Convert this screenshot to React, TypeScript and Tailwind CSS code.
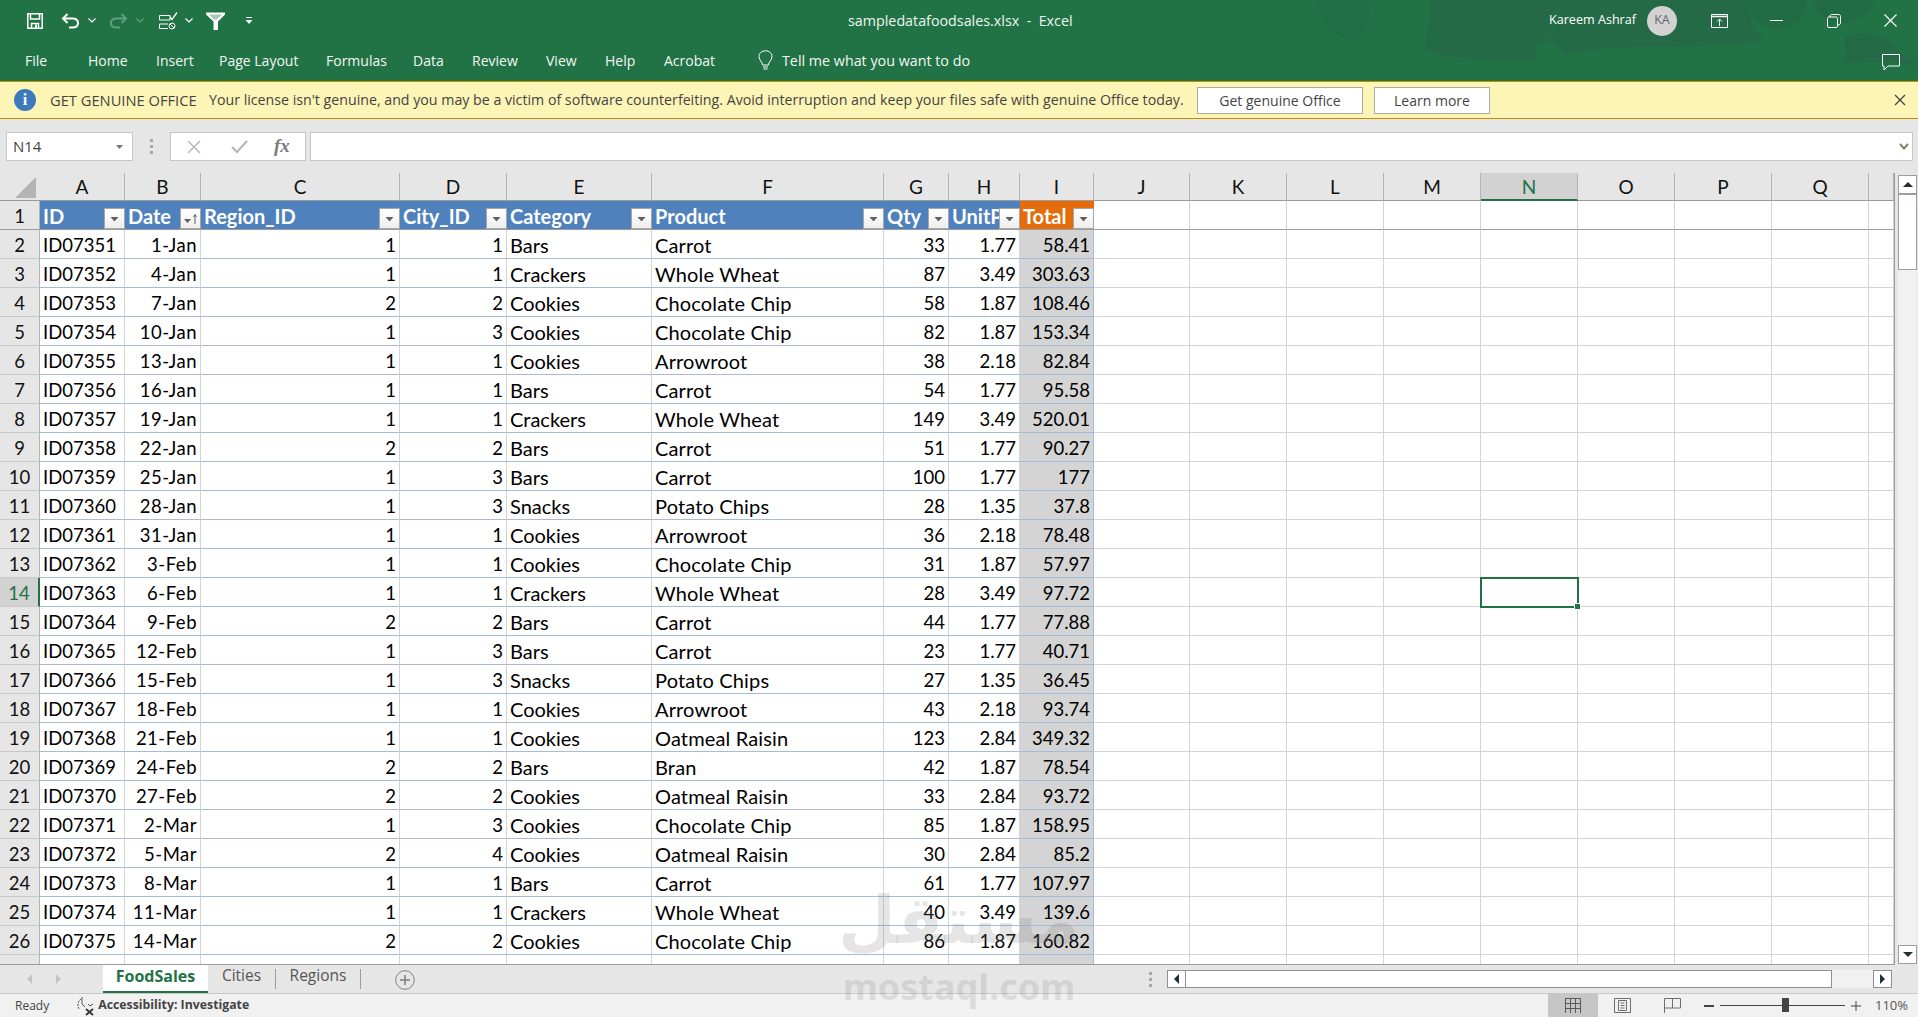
import React from "react";

const rows: [string, string, number, number, string, string, number, string, string][] = [
  ["ID07351", "1-Jan", 1, 1, "Bars", "Carrot", 33, "1.77", "58.41"],
  ["ID07352", "4-Jan", 1, 1, "Crackers", "Whole Wheat", 87, "3.49", "303.63"],
  ["ID07353", "7-Jan", 2, 2, "Cookies", "Chocolate Chip", 58, "1.87", "108.46"],
  ["ID07354", "10-Jan", 1, 3, "Cookies", "Chocolate Chip", 82, "1.87", "153.34"],
  ["ID07355", "13-Jan", 1, 1, "Cookies", "Arrowroot", 38, "2.18", "82.84"],
  ["ID07356", "16-Jan", 1, 1, "Bars", "Carrot", 54, "1.77", "95.58"],
  ["ID07357", "19-Jan", 1, 1, "Crackers", "Whole Wheat", 149, "3.49", "520.01"],
  ["ID07358", "22-Jan", 2, 2, "Bars", "Carrot", 51, "1.77", "90.27"],
  ["ID07359", "25-Jan", 1, 3, "Bars", "Carrot", 100, "1.77", "177"],
  ["ID07360", "28-Jan", 1, 3, "Snacks", "Potato Chips", 28, "1.35", "37.8"],
  ["ID07361", "31-Jan", 1, 1, "Cookies", "Arrowroot", 36, "2.18", "78.48"],
  ["ID07362", "3-Feb", 1, 1, "Cookies", "Chocolate Chip", 31, "1.87", "57.97"],
  ["ID07363", "6-Feb", 1, 1, "Crackers", "Whole Wheat", 28, "3.49", "97.72"],
  ["ID07364", "9-Feb", 2, 2, "Bars", "Carrot", 44, "1.77", "77.88"],
  ["ID07365", "12-Feb", 1, 3, "Bars", "Carrot", 23, "1.77", "40.71"],
  ["ID07366", "15-Feb", 1, 3, "Snacks", "Potato Chips", 27, "1.35", "36.45"],
  ["ID07367", "18-Feb", 1, 1, "Cookies", "Arrowroot", 43, "2.18", "93.74"],
  ["ID07368", "21-Feb", 1, 1, "Cookies", "Oatmeal Raisin", 123, "2.84", "349.32"],
  ["ID07369", "24-Feb", 2, 2, "Bars", "Bran", 42, "1.87", "78.54"],
  ["ID07370", "27-Feb", 2, 2, "Cookies", "Oatmeal Raisin", 33, "2.84", "93.72"],
  ["ID07371", "2-Mar", 1, 3, "Cookies", "Chocolate Chip", 85, "1.87", "158.95"],
  ["ID07372", "5-Mar", 2, 4, "Cookies", "Oatmeal Raisin", 30, "2.84", "85.2"],
  ["ID07373", "8-Mar", 1, 1, "Bars", "Carrot", 61, "1.77", "107.97"],
  ["ID07374", "11-Mar", 1, 1, "Crackers", "Whole Wheat", 40, "3.49", "139.6"],
  ["ID07375", "14-Mar", 2, 2, "Cookies", "Chocolate Chip", 86, "1.87", "160.82"],
];

const tableHeads = ["ID", "Date", "Region_ID", "City_ID", "Category", "Product", "Qty", "UnitPrice", "Total"];
const letters = ["A", "B", "C", "D", "E", "F", "G", "H", "I", "J", "K", "L", "M", "N", "O", "P", "Q", ""];
const blanks = ["J", "K", "L", "M", "N", "O", "P", "Q", "R"];
const menu: [string, string][] = [
  ["File", "w-[63px]"],
  ["Home", "w-[68px]"],
  ["Insert", "w-[63px]"],
  ["Page Layout", "w-[107px]"],
  ["Formulas", "w-[87px]"],
  ["Data", "w-[59px]"],
  ["Review", "w-[74px]"],
  ["View", "w-[59px]"],
  ["Help", "w-[59px]"],
  ["Acrobat", "w-[94px]"],
];

function Caret({ className }: { className: string }) {
  return (
    <svg className={className} width="8" height="5" viewBox="0 0 8 5" fill="none" stroke="currentColor" strokeWidth="1.2">
      <path d="M0.5 0.5L4 4L7.5 0.5" />
    </svg>
  );
}

function FilterButton({ sorted }: { sorted?: boolean }) {
  return (
    <div className="absolute right-0 bottom-0 w-[21px] h-[21px] border border-[#a6a6a6] bg-gradient-to-b from-white to-[#eeeeee] flex items-center justify-center">
      <svg width="19" height="19" viewBox="0 0 19 19">
        <path d={sorted ? "M3 10h7l-3.500 4z" : "M5.500 8h8l-4 4.500z"} fill="#606060" />
        {sorted && <path d="M14 15V6M12.500 8L14 5.500L15.500 8" fill="none" stroke="#606060" strokeWidth="1" />}
      </svg>
    </div>
  );
}

function TitleArt() {
  return (
    <svg className="absolute inset-0 pointer-events-none" width="1918" height="81" viewBox="0 0 1918 81">
      <path d="M1315 0C1318 18 1335 38 1352 42C1368 36 1372 14 1368 0Z" fill="#226e44" />
      <path d="M1428 0C1434 18 1424 38 1426 49C1450 62 1500 60 1538 60C1538 50 1530 46 1545 42C1552 28 1560 14 1566 0Z" fill="#246a46" />
      <path d="M1566 0C1560 18 1552 34 1548 40C1556 46 1562 50 1565 55C1600 44 1660 48 1700 46C1735 44 1760 44 1765 37C1752 32 1748 18 1752 0Z" fill="#246a46" />
      <path d="M1752 0C1750 14 1756 28 1776 30C1800 28 1808 12 1806 0Z" fill="#226c44" />
      <path d="M1812 0C1815 20 1840 28 1858 20C1872 14 1876 6 1872 0Z" fill="#226c44" />
      <path d="M1846 36C1868 28 1884 38 1890 42C1904 58 1918 64 1918 66C1890 58 1862 64 1842 62C1852 52 1840 44 1846 36Z" fill="#246a46" />
    </svg>
  );
}

function TitleBar() {
  return (
    <div className="relative h-[81px] bg-[#217346] text-white font-['Open_Sans',sans-serif] shrink-0">
      <TitleArt />
      <div className="relative h-[41px] flex items-center">
        <div className="w-[848px] shrink-0 flex items-center pl-[27px]">
          <svg width="16" height="16" viewBox="0 0 16 16" fill="none" stroke="white" strokeWidth="1.500">
            <path d="M0.800 0.800H15.200V15.200H0.800Z" />
            <path d="M3.500 1V6H12.500V1" />
            <path d="M4.500 15V10.500H11.500V15" />
            <rect x="8" y="11.500" width="2" height="3.500" fill="white" stroke="none" />
          </svg>
          <svg className="ml-[18px]" width="19" height="16" viewBox="0 0 19 16" fill="none" stroke="white" strokeWidth="2">
            <path d="M2 5.500H11.500C15 5.500 17 7.500 17 10C17 12.500 15 14.500 11.500 14.500H8" />
            <path d="M6.500 1L2 5.500L6.500 10" />
          </svg>
          <Caret className="ml-[8px] text-white" />
          <svg className="ml-[13px] opacity-30" width="19" height="16" viewBox="0 0 19 16" fill="none" stroke="white" strokeWidth="2">
            <path d="M17 5.500H7.500C4 5.500 2 7.500 2 10C2 12.500 4 14.500 7.500 14.500H11" />
            <path d="M12.500 1L17 5.500L12.500 10" />
          </svg>
          <Caret className="ml-[8px] text-white opacity-30" />
          <svg className="ml-[15px]" width="19" height="18" viewBox="0 0 19 18" fill="none" stroke="white" strokeWidth="1">
            <path d="M0.500 3.500H11V8H0.500ZM0.500 12H9M0.500 12V16.500H9" />
            <path d="M11 5L13 7.500L18 0.500" strokeWidth="1.300" />
            <circle cx="13" cy="14" r="3" />
            <path d="M11 12L15 16" />
          </svg>
          <Caret className="ml-[7px] text-white" />
          <svg className="ml-[13px]" width="19" height="18" viewBox="0 0 19 18" fill="white">
            <path d="M0 0.500H19V2.500L12 9.500V18H7.500V9.500L0 2.500Z" />
            <path d="M3 2.500H16L11 7.500H8Z" fill="#a9c7b5" />
          </svg>
          <svg className="ml-[20px]" width="8" height="8" viewBox="0 0 8 8" fill="white">
            <rect x="1" y="0" width="6" height="1" />
            <path d="M0.500 3H7.500L4 7Z" />
          </svg>
        </div>
        <div className="text-[14.300px] whitespace-pre text-[#eef5f0]">sampledatafoodsales.xlsx  -  Excel</div>
        <div className="flex-1 flex items-center justify-end">
          <span className="text-[12.600px]">Kareem Ashraf</span>
          <div className="ml-[11px] w-[30px] h-[30px] rounded-full bg-[#d2d2d2] text-[#666666] text-[12.500px] flex items-center justify-center">KA</div>
          <svg className="ml-[34px]" width="17" height="14" viewBox="0 0 17 14" fill="none" stroke="white" strokeWidth="1">
            <path d="M0.500 0.500H16.500V13.500H0.500Z" />
            <path d="M0.500 2.500H16.500" strokeWidth="1.500" />
            <path d="M8.500 12V5M6 7.500L8.500 5L11 7.500" />
          </svg>
          <svg className="ml-[42px]" width="13" height="1" viewBox="0 0 13 1"><rect width="13" height="1" fill="white" /></svg>
          <svg className="ml-[44px]" width="14" height="14" viewBox="0 0 14 14" fill="none" stroke="white" strokeWidth="1">
            <rect x="0.500" y="3" width="10" height="10.500" rx="1.500" />
            <path d="M3 3V2C3 1 3.800 0.500 4.800 0.500H11.500C12.700 0.500 13.500 1.300 13.500 2.500V9C13.500 10 13 10.800 11 11" />
          </svg>
          <svg className="ml-[43px] mr-[21px]" width="13" height="13" viewBox="0 0 13 13" fill="none" stroke="white" strokeWidth="1.200">
            <path d="M0.500 0.500L12.500 12.500M12.500 0.500L0.500 12.500" />
          </svg>
        </div>
      </div>
      <div className="relative h-[40px] flex items-center text-[14px] pl-[25px] pb-[1px] text-[#f3f7f4]">
        {menu.map(([label, width]) => (
          <div key={label} className={width}>{label}</div>
        ))}
        <svg width="15" height="21" viewBox="0 0 15 21" fill="none" stroke="white" strokeWidth="1">
          <path d="M4.500 15C4.500 11.500 1 10.500 1 6.500C1 3.200 3.800 0.800 7.500 0.800C11.200 0.800 14 3.200 14 6.500C14 10.500 10.500 11.500 10.500 15Z" />
          <path d="M5 17H10M5.500 19H9.500" />
        </svg>
        <div className="ml-[9px] text-[14.300px]">Tell me what you want to do</div>
        <svg className="absolute left-[1882px] top-[13px]" width="18" height="17" viewBox="0 0 18 17" fill="none" stroke="white" strokeWidth="1">
          <path d="M0.500 0.500H17.500V12H6L2 16V12H0.500Z" />
        </svg>
      </div>
    </div>
  );
}

function LicenseBar() {
  return (
    <div className="h-[38px] bg-[#fdf5b5] border-y border-[#bf9000] flex items-center pl-[14px] text-[#444444] text-[14.200px] font-['Open_Sans',sans-serif] shrink-0">
      <div className="w-[22px] h-[22px] rounded-full bg-[#3c79bd] flex items-center justify-center text-white font-bold text-[16px] font-['Liberation_Serif',serif]">i</div>
      <span className="ml-[14px] w-[159px] whitespace-nowrap text-[14.700px]">GET GENUINE OFFICE</span>
      <span className="whitespace-nowrap w-[988px]">Your license isn't genuine, and you may be a victim of software counterfeiting. Avoid interruption and keep your files safe with genuine Office today.</span>
      <button className="w-[166px] h-[27px] bg-white border border-[#ababab] text-[14px]">Get genuine Office</button>
      <button className="ml-[11px] w-[116px] h-[27px] bg-white border border-[#ababab] text-[14px]">Learn more</button>
      <svg className="ml-auto mr-[12px]" width="12" height="12" viewBox="0 0 12 12" fill="none" stroke="#444444" strokeWidth="1.300">
        <path d="M1 1L11 11M11 1L1 11" />
      </svg>
    </div>
  );
}

function FormulaBar() {
  return (
    <div className="h-[54px] pt-[13px] pl-[6px] pr-[5px] bg-[#e6e6e6] shrink-0 font-['Open_Sans',sans-serif]">
      <div className="h-[29px] flex items-stretch">
        <div className="w-[127px] bg-white border border-[#c6c6c6] flex items-center justify-between pl-[6px] pr-[9px] text-[15px] text-[#444444]">
          N14
          <svg width="7" height="4" viewBox="0 0 7 4"><path d="M0 0H7L3.500 4Z" fill="#777777" /></svg>
        </div>
        <div className="w-[37px] flex items-center justify-center">
          <div className="flex flex-col gap-[3px]">
            <div className="w-[3px] h-[3px] bg-[#a8a8a8]" />
            <div className="w-[3px] h-[3px] bg-[#a8a8a8]" />
            <div className="w-[3px] h-[3px] bg-[#a8a8a8]" />
          </div>
        </div>
        <div className="w-[136px] bg-white border border-[#c6c6c6] flex items-center">
          <svg className="ml-[16px]" width="14" height="14" viewBox="0 0 14 14" fill="none" stroke="#b8b8b8" strokeWidth="1.500">
            <path d="M1 1L13 13M13 1L1 13" />
          </svg>
          <svg className="ml-[30px]" width="17" height="14" viewBox="0 0 17 14" fill="none" stroke="#b8b8b8" strokeWidth="2.200">
            <path d="M1 7L6 12L16 1" />
          </svg>
          <span className="ml-[26px] text-[#7a7a7a] italic font-bold text-[19px] font-['Liberation_Serif',serif]">fx</span>
        </div>
        <div className="ml-[4px] flex-1 bg-white border border-[#c6c6c6] flex items-center justify-end pr-[3px]">
          <svg width="10" height="7" viewBox="0 0 10 7" fill="none" stroke="#857b6d" strokeWidth="2"><path d="M1 1L5 5.500L9 1" /></svg>
        </div>
      </div>
    </div>
  );
}

function ColumnHeaders() {
  return (
    <>
      <div className="relative h-[28px] border-b border-[#9b9b9b] bg-[#e6e6e6]">
        <svg className="absolute left-[15px] top-[4px]" width="21" height="21" viewBox="0 0 21 21"><path d="M21 0V21H0Z" fill="#b4b4b4" /></svg>
      </div>
      {letters.map((letter, i) => {
        const isActive = letter === "N";
        return (
          <div
            key={i}
            className={
              isActive
                ? "h-[28px] pt-[2px] border-r border-[#b4b4b4] border-b-2 border-b-[#217346] bg-[#d2d2d2] text-[#217346] flex items-center justify-center text-[19px]"
                : "h-[28px] pt-[2px] border-r border-[#b4b4b4] border-b border-b-[#9b9b9b] bg-[#e6e6e6] text-[#111111] flex items-center justify-center text-[19px]"
            }
          >
            {letter}
          </div>
        );
      })}
    </>
  );
}

function HeaderRow() {
  return (
    <>
      <div className="h-[29px] pt-[3px] border-r border-[#b4b4b4] border-b border-b-[#9b9b9b] bg-[#e6e6e6] flex items-center justify-center text-[18.500px] text-[#111111]">1</div>
      {tableHeads.map((head, i) => (
        <div
          key={head}
          className={
            i === 8
              ? "relative h-[29px] bg-[#e46c0a] border-b border-[#9b9b9b] text-white font-bold text-[20px] flex items-center pl-[3px] pt-[2px] overflow-hidden whitespace-nowrap"
              : "relative h-[29px] bg-[#4f81bd] border-b border-[#9b9b9b] text-white font-bold text-[20px] flex items-center pl-[3px] pt-[2px] overflow-hidden whitespace-nowrap"
          }
        >
          {head}
          <FilterButton sorted={i === 1} />
        </div>
      ))}
      {blanks.map((c) => (
        <div key={c} className="h-[29px] bg-white border-r border-[#d4d4d4] border-b border-b-[#9b9b9b]" />
      ))}
    </>
  );
}

function DataRow({ row, num }: { row: (typeof rows)[number]; num: number }) {
  const isActive = num === 14;
  const base = "h-[29px] bg-white border-r border-[#d4d4d4] border-b border-b-[#a3bcdc] flex items-center pl-[3px] pr-[3px] whitespace-nowrap overflow-hidden";
  return (
    <>
      <div
        className={
          isActive
            ? "h-[29px] pt-[4px] bg-[#d2d2d2] text-[#217346] border-r-2 border-[#217346] border-b border-b-[#c8c8c8] flex items-center justify-center text-[18.500px]"
            : "h-[29px] pt-[4px] bg-[#e6e6e6] text-[#111111] border-r border-[#b4b4b4] border-b border-b-[#c8c8c8] flex items-center justify-center text-[18.500px]"
        }
      >
        {num}
      </div>
      <div className={base + " pt-[3px]"}>{row[0]}</div>
      <div className={base + " pt-[3px] justify-end tracking-[0.5px]"}>{row[1]}</div>
      <div className={base + " pt-[3px] justify-end"}>{row[2]}</div>
      <div className={base + " pt-[3px] justify-end"}>{row[3]}</div>
      <div className={base + " pt-[1px] text-[20px]"}>{row[4]}</div>
      <div className={base + " pt-[1px] text-[20px] tracking-[0.15px]"}>{row[5]}</div>
      <div className={base + " pt-[3px] justify-end"}>{row[6]}</div>
      <div className={base + " pt-[3px] justify-end"}>{row[7]}</div>
      <div className="h-[29px] bg-[#d4d4d4] border-r border-[#a3bcdc] border-b border-b-[#a3bcdc] flex items-center justify-end pr-[3px] pt-[3px]">{row[8]}</div>
      {blanks.map((c) => (
        <div key={c} className="relative h-[29px] bg-white border-r border-[#d4d4d4] border-b border-b-[#d4d4d4]">
          {isActive && c === "N" && (
            <div className="absolute -left-[1px] -top-[1px] w-[99px] h-[31px] border-2 border-[#217346] z-10">
              <div className="absolute -right-[4px] -bottom-[4px] w-[7px] h-[7px] bg-[#217346] border border-white" />
            </div>
          )}
        </div>
      ))}
    </>
  );
}

function PartialRow() {
  return (
    <>
      <div className="h-[9px] bg-[#e6e6e6] border-r border-[#b4b4b4]" />
      {letters.map((letter, i) => (
        <div
          key={i}
          className={i === 8 ? "h-[9px] bg-[#d4d4d4] border-r border-[#a3bcdc]" : "h-[9px] bg-white border-r border-[#d4d4d4]"}
        />
      ))}
    </>
  );
}

function Scrollbar() {
  return (
    <div className="flex-1 pl-[3px] pr-[1px] pt-[2px] pb-[1px] flex flex-col bg-[#e6e6e6]">
      <div className="flex-1 flex flex-col bg-[#f1f1f1]">
        <div className="h-[19px] bg-white border border-[#9a9f9a] flex items-center justify-center">
          <svg width="10" height="5" viewBox="0 0 10 5"><path d="M5 0L10 5H0Z" fill="#1f2f33" /></svg>
        </div>
        <div className="h-[76px] bg-white border border-[#9a9f9a]" />
        <div className="flex-1" />
        <div className="h-[19px] bg-white border border-[#9a9f9a] flex items-center justify-center">
          <svg width="10" height="5" viewBox="0 0 10 5"><path d="M5 5L10 0H0Z" fill="#1f2f33" /></svg>
        </div>
      </div>
    </div>
  );
}

function Sheet() {
  return (
    <div className="h-[792px] flex shrink-0">
      <div className="w-[1895px] overflow-hidden border-r border-b border-[#9b9b9b] font-['Lato',sans-serif] text-[18.500px] text-black">
        <div className="grid grid-cols-[40px_85px_76px_199px_107px_145px_232px_65px_71px_74px_96px_97px_97px_97px_97px_97px_97px_97px_25px]">
          <ColumnHeaders />
          <HeaderRow />
          {rows.map((row, i) => (
            <DataRow key={row[0]} row={row} num={i + 2} />
          ))}
          <PartialRow />
        </div>
      </div>
      <Scrollbar />
    </div>
  );
}

function TabsBar() {
  return (
    <div className="relative h-[28px] bg-[#e6e6e6] flex items-stretch font-['Open_Sans',sans-serif] text-[15.500px] text-[#555555] shrink-0">
      <div className="w-[103px] flex items-center pl-[27px]">
        <svg width="5" height="10" viewBox="0 0 5 10"><path d="M5 0V10L0 5Z" fill="#c4c4c4" /></svg>
        <svg className="ml-[24px]" width="5" height="10" viewBox="0 0 5 10"><path d="M0 0V10L5 5Z" fill="#c4c4c4" /></svg>
      </div>
      <div className="w-[105px] bg-white border-b-2 border-[#217346] text-[#217346] text-[16px] font-bold flex items-center justify-center pb-[4px]">FoodSales</div>
      <div className="w-[68px] border-r border-[#9b9b9b] my-[4px] flex items-center justify-center pb-[7px]">Cities</div>
      <div className="w-[85px] border-r border-[#9b9b9b] my-[4px] flex items-center justify-center pb-[7px]">Regions</div>
      <svg className="ml-[34px] mt-[5px]" width="20" height="20" viewBox="0 0 20 20" fill="none" stroke="#7f7f7f">
        <circle cx="10" cy="10" r="9.300" />
        <path d="M10 5V15M5 10H15" strokeWidth="1.500" />
      </svg>
      <div className="ml-auto flex items-center">
        <div className="flex flex-col gap-[3px] mr-[15px]">
          <div className="w-[3px] h-[3px] bg-[#a8a8a8]" />
          <div className="w-[3px] h-[3px] bg-[#a8a8a8]" />
          <div className="w-[3px] h-[3px] bg-[#a8a8a8]" />
        </div>
        <div className="w-[725px] h-[18px] mr-[26px] flex bg-[#f1f1f1]">
          <div className="w-[19px] bg-white border border-[#8f8f8f] flex items-center justify-center">
            <svg width="5" height="10" viewBox="0 0 5 10"><path d="M5 0V10L0 5Z" fill="#1f2f33" /></svg>
          </div>
          <div className="w-[646px] bg-white border-y border-r border-[#8f8f8f]" />
          <div className="flex-1" />
          <div className="w-[19px] bg-white border border-[#8f8f8f] flex items-center justify-center">
            <svg width="5" height="10" viewBox="0 0 5 10"><path d="M0 0V10L5 5Z" fill="#1f2f33" /></svg>
          </div>
        </div>
      </div>
    </div>
  );
}

function StatusBar() {
  return (
    <div className="flex-1 bg-[#f1f1f1] border-t border-[#c8c8c8] flex items-center text-[12px] text-[#444444] font-['Open_Sans',sans-serif]">
      <span className="ml-[15px]">Ready</span>
      <svg className="ml-[26px]" width="20" height="20" viewBox="0 0 20 20" fill="none" stroke="#555555" strokeWidth="1">
        <path d="M6 3C3 5 2 9 4 13" strokeDasharray="2 1" />
        <path d="M7 1V8M7 8L10 11" />
        <path d="M13 8L15 10L18 8" />
        <path d="M11 13L18 19M18 13L11 19" strokeWidth="1.800" stroke="#333333" />
      </svg>
      <span className="ml-[3px] font-bold text-[12.300px]">Accessibility: Investigate</span>
      <div className="ml-auto self-stretch w-[50px] bg-[#c6c6c6] flex items-center justify-center">
        <svg width="16" height="15" viewBox="0 0 16 15" fill="none" stroke="#5a5a5a"><path d="M0.500 0V15M5.500 0V15M10.500 0V15M15.500 0V15M0 0.500H16M0 5.500H16M0 10.500H16" /></svg>
      </div>
      <div className="w-[50px] flex items-center justify-center">
        <svg width="17" height="15" viewBox="0 0 17 15" fill="none" stroke="#6e6e6e"><path d="M0.500 0.500H16.500V14.500H0.500ZM4.500 2.500H12.500V12.500H4.500ZM6.500 5H10.500M6.500 7.500H10.500M6.500 10H10.500" /></svg>
      </div>
      <div className="w-[50px] flex items-center justify-center">
        <svg width="17" height="15" viewBox="0 0 17 15" fill="none" stroke="#6e6e6e"><path d="M0.500 15V0.500H16.500V10M0.500 10H16.500M8.500 0.500V10" /></svg>
      </div>
      <svg className="ml-[6px]" width="10" height="2" viewBox="0 0 10 2"><rect width="10" height="2" fill="#444444" /></svg>
      <div className="relative ml-[6px] w-[125px] h-[1px] bg-[#444444]">
        <div className="absolute left-[62px] -top-[7px] w-[7px] h-[14px] bg-[#444444]" />
      </div>
      <svg className="ml-[6px]" width="10" height="10" viewBox="0 0 10 10"><path d="M5 0V10M0 5H10" stroke="#444444" /></svg>
      <span className="ml-[14px] mr-[10px] text-[13px] text-[#555555]">110%</span>
    </div>
  );
}

function Watermark() {
  return (
    <div className="absolute left-[843px] top-[880px] w-[232px] flex flex-col items-center pointer-events-none text-[#7f7f7f]/20 font-bold">
      <div className="h-[82px] text-[66px] leading-[82px] font-['DejaVu_Sans',sans-serif]">مستقل</div>
      <div className="mt-[3px] text-[36px] leading-[44px] font-['Noto_Sans',sans-serif]">mostaql.com</div>
    </div>
  );
}

export default function App() {
  return (
    <div className="relative w-[1918px] h-[1017px] overflow-hidden flex flex-col bg-[#e6e6e6]">
      <TitleBar />
      <LicenseBar />
      <FormulaBar />
      <Sheet />
      <TabsBar />
      <StatusBar />
      <Watermark />
    </div>
  );
}
